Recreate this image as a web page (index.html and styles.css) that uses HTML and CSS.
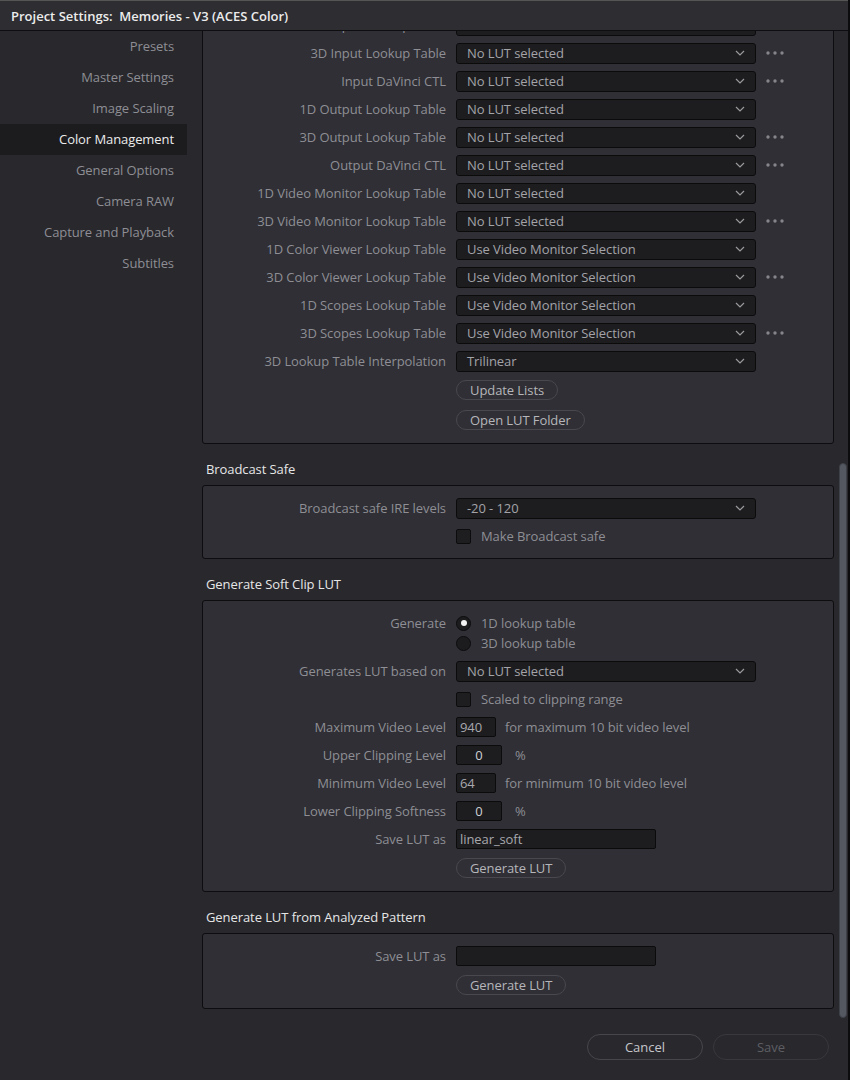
FILE: index.html
```html
<!DOCTYPE html>
<html>
<head>
<meta charset="utf-8">
<link rel="stylesheet" href="styles.css">
</head>
<body>
<div class="app">
  <div class="titlebar">Project Settings:&nbsp; Memories - V3 (ACES Color)</div>
  <div class="window">
    <nav class="sidebar">
      <div class="nav-item">Presets</div>
      <div class="nav-item">Master Settings</div>
      <div class="nav-item">Image Scaling</div>
      <div class="nav-item active">Color Management</div>
      <div class="nav-item">General Options</div>
      <div class="nav-item">Camera RAW</div>
      <div class="nav-item">Capture and Playback</div>
      <div class="nav-item">Subtitles</div>
    </nav>
    <div class="main">
      <div class="scroller">
        <div class="content">
          <div class="inner">
            <div class="box">
              <div class="row"><div class="label">1D Input Lookup Table</div><div class="ctrl"><div class="select">No LUT selected<svg class="chev" viewBox="0 0 10 6"><polyline points="1,1 5,5 9,1"/></svg></div></div></div>
              <div class="row"><div class="label">3D Input Lookup Table</div><div class="ctrl"><div class="select">No LUT selected<svg class="chev" viewBox="0 0 10 6"><polyline points="1,1 5,5 9,1"/></svg></div><svg class="dots" viewBox="0 0 20 4"><circle cx="2" cy="2" r="1.7"/><circle cx="9" cy="2" r="1.7"/><circle cx="16" cy="2" r="1.7"/></svg></div></div>
              <div class="row"><div class="label">Input DaVinci CTL</div><div class="ctrl"><div class="select">No LUT selected<svg class="chev" viewBox="0 0 10 6"><polyline points="1,1 5,5 9,1"/></svg></div><svg class="dots" viewBox="0 0 20 4"><circle cx="2" cy="2" r="1.7"/><circle cx="9" cy="2" r="1.7"/><circle cx="16" cy="2" r="1.7"/></svg></div></div>
              <div class="row"><div class="label">1D Output Lookup Table</div><div class="ctrl"><div class="select">No LUT selected<svg class="chev" viewBox="0 0 10 6"><polyline points="1,1 5,5 9,1"/></svg></div></div></div>
              <div class="row"><div class="label">3D Output Lookup Table</div><div class="ctrl"><div class="select">No LUT selected<svg class="chev" viewBox="0 0 10 6"><polyline points="1,1 5,5 9,1"/></svg></div><svg class="dots" viewBox="0 0 20 4"><circle cx="2" cy="2" r="1.7"/><circle cx="9" cy="2" r="1.7"/><circle cx="16" cy="2" r="1.7"/></svg></div></div>
              <div class="row"><div class="label">Output DaVinci CTL</div><div class="ctrl"><div class="select">No LUT selected<svg class="chev" viewBox="0 0 10 6"><polyline points="1,1 5,5 9,1"/></svg></div><svg class="dots" viewBox="0 0 20 4"><circle cx="2" cy="2" r="1.7"/><circle cx="9" cy="2" r="1.7"/><circle cx="16" cy="2" r="1.7"/></svg></div></div>
              <div class="row"><div class="label">1D Video Monitor Lookup Table</div><div class="ctrl"><div class="select">No LUT selected<svg class="chev" viewBox="0 0 10 6"><polyline points="1,1 5,5 9,1"/></svg></div></div></div>
              <div class="row"><div class="label">3D Video Monitor Lookup Table</div><div class="ctrl"><div class="select">No LUT selected<svg class="chev" viewBox="0 0 10 6"><polyline points="1,1 5,5 9,1"/></svg></div><svg class="dots" viewBox="0 0 20 4"><circle cx="2" cy="2" r="1.7"/><circle cx="9" cy="2" r="1.7"/><circle cx="16" cy="2" r="1.7"/></svg></div></div>
              <div class="row"><div class="label">1D Color Viewer Lookup Table</div><div class="ctrl"><div class="select">Use Video Monitor Selection<svg class="chev" viewBox="0 0 10 6"><polyline points="1,1 5,5 9,1"/></svg></div></div></div>
              <div class="row"><div class="label">3D Color Viewer Lookup Table</div><div class="ctrl"><div class="select">Use Video Monitor Selection<svg class="chev" viewBox="0 0 10 6"><polyline points="1,1 5,5 9,1"/></svg></div><svg class="dots" viewBox="0 0 20 4"><circle cx="2" cy="2" r="1.7"/><circle cx="9" cy="2" r="1.7"/><circle cx="16" cy="2" r="1.7"/></svg></div></div>
              <div class="row"><div class="label">1D Scopes Lookup Table</div><div class="ctrl"><div class="select">Use Video Monitor Selection<svg class="chev" viewBox="0 0 10 6"><polyline points="1,1 5,5 9,1"/></svg></div></div></div>
              <div class="row"><div class="label">3D Scopes Lookup Table</div><div class="ctrl"><div class="select">Use Video Monitor Selection<svg class="chev" viewBox="0 0 10 6"><polyline points="1,1 5,5 9,1"/></svg></div><svg class="dots" viewBox="0 0 20 4"><circle cx="2" cy="2" r="1.7"/><circle cx="9" cy="2" r="1.7"/><circle cx="16" cy="2" r="1.7"/></svg></div></div>
              <div class="row"><div class="label">3D Lookup Table Interpolation</div><div class="ctrl"><div class="select">Trilinear<svg class="chev" viewBox="0 0 10 6"><polyline points="1,1 5,5 9,1"/></svg></div></div></div>
              <div class="btn-row"><button class="pill">Update Lists</button></div>
              <div class="btn-row second"><button class="pill">Open LUT Folder</button></div>
            </div>

            <div class="section-title">Broadcast Safe</div>
            <div class="box no-btn">
              <div class="row"><div class="label">Broadcast safe IRE levels</div><div class="ctrl"><div class="select">-20 - 120<svg class="chev" viewBox="0 0 10 6"><polyline points="1,1 5,5 9,1"/></svg></div></div></div>
              <div class="row"><div class="label"></div><div class="ctrl"><span class="check"></span><span class="opt-text">Make Broadcast safe</span></div></div>
            </div>

            <div class="section-title">Generate Soft Clip LUT</div>
            <div class="box">
              <div class="radio-row">
                <div class="label">Generate</div>
                <div class="radio-list">
                  <div class="radio-opt"><span class="radio on"></span><span class="opt-text">1D lookup table</span></div>
                  <div class="radio-opt"><span class="radio"></span><span class="opt-text">3D lookup table</span></div>
                </div>
              </div>
              <div class="row"><div class="label">Generates LUT based on</div><div class="ctrl"><div class="select">No LUT selected<svg class="chev" viewBox="0 0 10 6"><polyline points="1,1 5,5 9,1"/></svg></div></div></div>
              <div class="row"><div class="label"></div><div class="ctrl"><span class="check"></span><span class="opt-text">Scaled to clipping range</span></div></div>
              <div class="row"><div class="label">Maximum Video Level</div><div class="ctrl"><div class="field num">940</div><span class="hint">for maximum 10 bit video level</span></div></div>
              <div class="row"><div class="label">Upper Clipping Level</div><div class="ctrl"><div class="field pct">0</div><span class="unit">%</span></div></div>
              <div class="row"><div class="label">Minimum Video Level</div><div class="ctrl"><div class="field num">64</div><span class="hint">for minimum 10 bit video level</span></div></div>
              <div class="row"><div class="label">Lower Clipping Softness</div><div class="ctrl"><div class="field pct">0</div><span class="unit">%</span></div></div>
              <div class="row"><div class="label">Save LUT as</div><div class="ctrl"><div class="field name">linear_soft</div></div></div>
              <div class="btn-row"><button class="pill">Generate LUT</button></div>
            </div>

            <div class="section-title">Generate LUT from Analyzed Pattern</div>
            <div class="box">
              <div class="row"><div class="label">Save LUT as</div><div class="ctrl"><div class="field name"></div></div></div>
              <div class="btn-row"><button class="pill">Generate LUT</button></div>
            </div>
          </div>
        </div>
        <div class="scrolltrack"><div class="thumb"></div></div>
      </div>
      <div class="footer">
        <button class="foot-btn">Cancel</button>
        <button class="foot-btn disabled">Save</button>
      </div>
    </div>
  </div>
</div>
</body>
</html>
```

FILE: styles.css
```css
* { box-sizing: border-box; }
html, body { margin: 0; padding: 0; }
body {
  width: 850px;
  height: 1080px;
  background: #28282d;
  font-family: "Open Sans", "Noto Sans", sans-serif;
  font-size: 13px;
  letter-spacing: -0.08px;
  color: #8e8e94;
  overflow: hidden;
}
.app {
  width: 850px;
  height: 1080px;
  display: flex;
  flex-direction: column;
  border-right: 2px solid #0c0c0e;
}
.titlebar {
  height: 31px;
  line-height: 30px;
  padding-left: 11px;
  background: #2d2d32;
  border-top: 1px solid #555;
  border-bottom: 1px solid #0e0e10;
  color: #ececec;
  font-weight: 600;
  font-size: 13px;
  letter-spacing: 0;
  white-space: pre;
}
.window {
  flex: 1;
  display: flex;
  min-height: 0;
}
.sidebar {
  width: 202px;
  flex: none;
}
.nav-item {
  width: 187px;
  height: 31px;
  line-height: 31px;
  text-align: right;
  padding-right: 13px;
  color: #8e8e94;
}
.nav-item.active {
  background: #1c1c1f;
  color: #ececec;
}
.main {
  flex: 1;
  display: flex;
  flex-direction: column;
  min-width: 0;
}
.scroller {
  height: 989px;
  display: flex;
}
.content {
  width: 632px;
  overflow: hidden;
}
.inner {
  margin-top: -29px;
}
.scrolltrack {
  width: 8px;
  margin-left: 5px;
}
.thumb {
  margin-top: 432px;
  height: 555px;
  width: 8px;
  border-radius: 4px;
  background: #545861;
  border: 1px solid #3e4148;
}
.box {
  background: #2f2f35;
  border: 1px solid #0d0d0f;
  border-radius: 3px;
  padding: 8px 0 13px;
}
.box.no-btn {
  padding-bottom: 8px;
}
.section-title {
  padding: 16px 0 7px 4px;
  line-height: 18px;
  color: #e6e6e6;
}
.row {
  display: flex;
  align-items: center;
  height: 28px;
}
.label {
  width: 243px;
  margin-right: 10px;
  text-align: right;
  white-space: nowrap;
  flex: none;
}
.ctrl {
  display: flex;
  align-items: center;
}
.select {
  width: 300px;
  height: 21px;
  background: #1d1d20;
  border: 1px solid #0b0b0c;
  border-radius: 3px;
  padding-left: 10px;
  color: #a3a3a8;
  display: flex;
  align-items: center;
  justify-content: space-between;
  line-height: 19px;
}
.chev {
  width: 10px;
  height: 6px;
  margin-right: 10px;
  fill: none;
  stroke: #9a9a9e;
  stroke-width: 1.2;
}
.dots {
  width: 20px;
  height: 4px;
  margin-left: 10px;
  fill: #85858a;
}
.btn-row {
  padding-left: 253px;
  margin-top: 5px;
  display: flex;
}
.btn-row.second {
  margin-top: 10px;
}
.pill {
  height: 20px;
  padding: 0 13px;
  border-radius: 10px;
  border: 1px solid #48484e;
  background: #2f2f35;
  color: #b6b6ba;
  font-family: inherit;
  font-size: 13px;
  letter-spacing: -0.08px;
  line-height: 18px;
}
.check {
  width: 15px;
  height: 15px;
  background: #1e1e21;
  border: 1px solid #0c0c0d;
  border-radius: 2px;
  flex: none;
}
.opt-text {
  margin-left: 10px;
  color: #8e8e94;
}
.radio-row {
  display: flex;
  padding: 4px 0;
}
.radio-row .label {
  line-height: 20px;
}
.radio-list {
  display: flex;
  flex-direction: column;
}
.radio-opt {
  height: 20px;
  display: flex;
  align-items: center;
}
.radio {
  width: 15px;
  height: 15px;
  border-radius: 50%;
  background: #1c1c1f;
  border: 1px solid #0c0c0d;
  display: flex;
  align-items: center;
  justify-content: center;
  flex: none;
}
.radio.on::after {
  content: "";
  width: 6px;
  height: 6px;
  border-radius: 50%;
  background: #f2f2f2;
}
.field {
  height: 20px;
  background: #1d1d20;
  border: 1px solid #0b0b0c;
  border-radius: 2px;
  color: #a8a8ad;
  line-height: 18px;
  padding-left: 3px;
}
.field.num { width: 40px; }
.field.pct { width: 46px; text-align: center; padding-left: 0; color: #d0d0d4; }
.field.name { width: 200px; }
.hint { margin-left: 9px; }
.unit { margin-left: 13px; }
.footer {
  flex: 1;
  display: flex;
  justify-content: flex-end;
  align-items: flex-start;
  gap: 10px;
  padding-top: 14px;
  padding-right: 19px;
}
.foot-btn {
  width: 116px;
  height: 26px;
  border-radius: 13px;
  border: 1px solid #46464c;
  background: #28282d;
  color: #c6c6ca;
  font-family: inherit;
  font-size: 13px;
}
.foot-btn.disabled {
  color: #5e5e63;
  border-color: #38383d;
}
```
